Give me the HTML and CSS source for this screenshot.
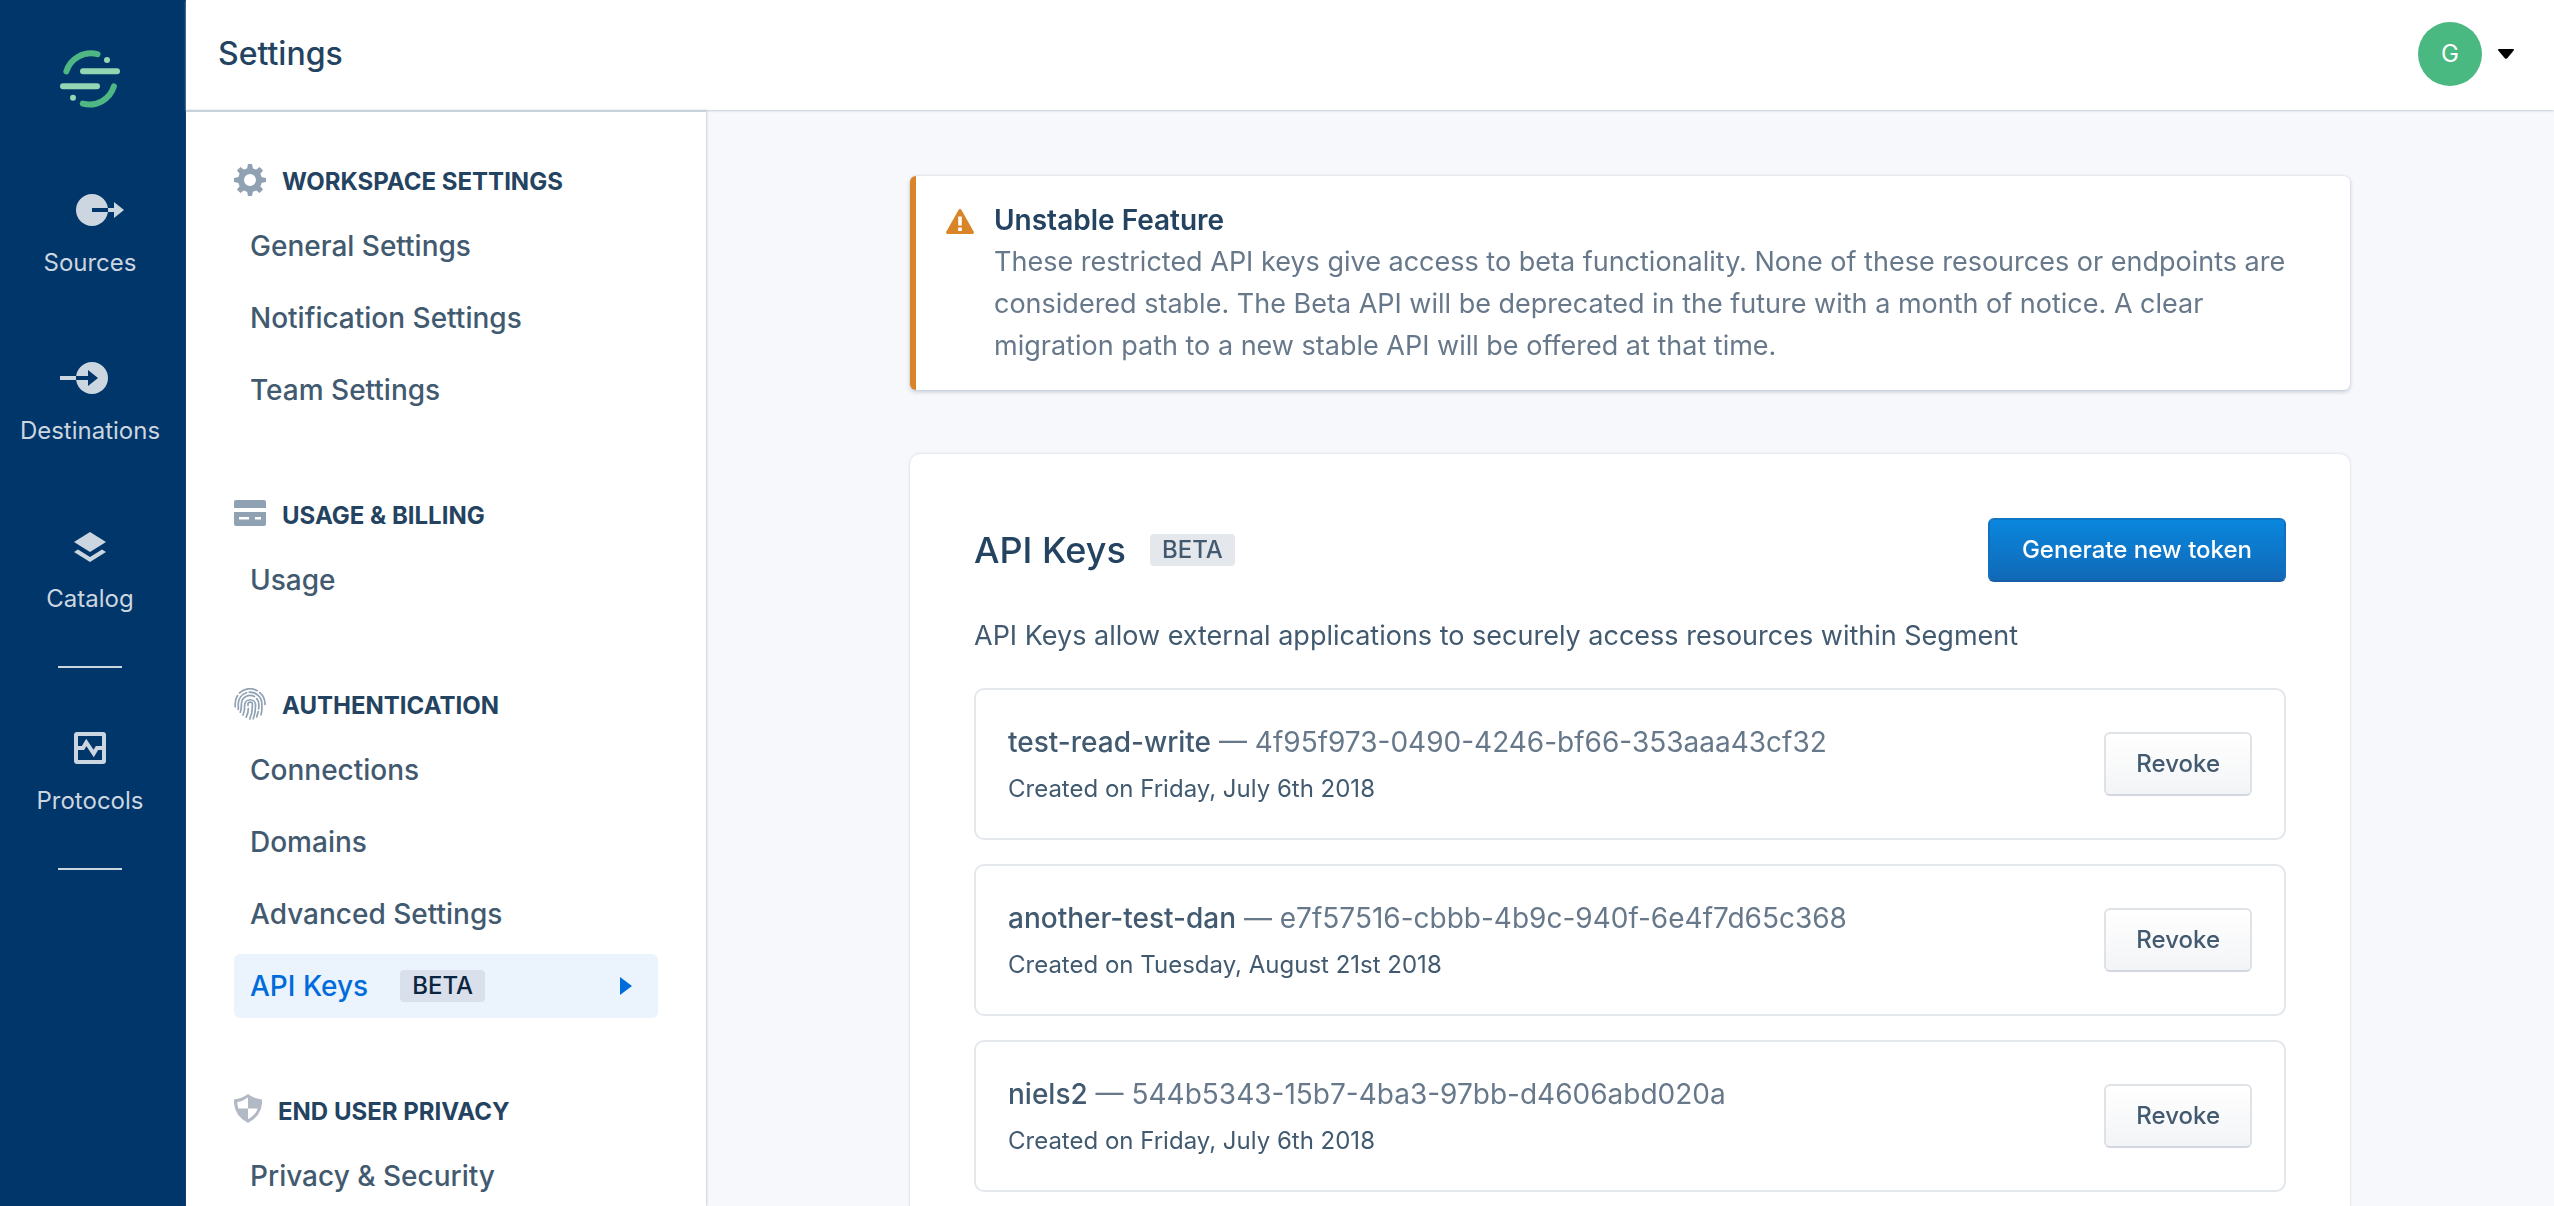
FILE: index.html
```html
<!DOCTYPE html>
<html lang="en">
<head>
<meta charset="utf-8">
<title>Settings – API Keys</title>
<meta name="viewport" content="width=device-width, initial-scale=1">
<link rel="stylesheet" href="styles.css">
</head>
<body>
<div class="app">
  <nav class="rail" aria-label="Primary">
    <a class="logo" href="#" aria-label="Home">
      <svg width="60" height="58" viewBox="0 0 60 58" fill="none" stroke-linecap="round" stroke-width="6">
        <path d="M6.3 21.5A25.6 25.6 0 0 1 37.5 4.2M53.9 36.4A25.6 25.6 0 0 1 22.8 53.6" stroke="#4fb783"/>
        <path d="M23 21.3H57M3 36.3H37" stroke="#93d6b4"/>
        <circle cx="47" cy="10" r="3" fill="#93d6b4"/><circle cx="13" cy="47.7" r="3" fill="#93d6b4"/>
      </svg>
    </a>
    <ul class="rail-group">
      <li><a class="rail-item" href="#">
        <svg width="68" height="32" viewBox="0 0 68 32"><circle cx="36" cy="16" r="16" fill="#ccd6e0"/><path d="M36 14H52V18H36z" fill="#003669"/><path d="M52 14H58V8L68 16L58 24V18H52z" fill="#ccd6e0"/></svg>
        Sources</a></li>
      <li><a class="rail-item" href="#">
        <svg width="68" height="32" viewBox="0 0 68 32"><circle cx="36" cy="16" r="16" fill="#ccd6e0"/><path d="M4 14H20V18H4z" fill="#ccd6e0"/><path d="M20 14H32V8L42 16L32 24V18H20z" fill="#003669"/></svg>
        Destinations</a></li>
      <li><a class="rail-item" href="#">
        <svg width="32" height="32" viewBox="0 0 32 32" fill="#ccd6e0"><path d="M16 2L32 12L16 22L0 12z"/><path d="M0 22L4 19.5L16 27L28 19.5L32 22L16 32z"/></svg>
        Catalog</a></li>
    </ul>
    <hr class="rail-rule">
    <ul class="rail-group rail-group-last">
      <li><a class="rail-item" href="#">
        <svg width="32" height="32" viewBox="0 0 32 32" fill="none" stroke="#ccd6e0" stroke-width="4"><rect x="2" y="2" width="28" height="28" rx="1"/><path d="M3 16H9L12.3 10.5L19.7 21.5L23 16H29"/></svg>
        Protocols</a></li>
    </ul>
    <hr class="rail-rule">
  </nav>

  <div class="shell">
    <header class="topbar">
      <h1>Settings</h1>
      <button class="account" type="button" aria-label="Account menu">
        <span class="avatar">G</span>
        <svg width="16" height="10" viewBox="0 0 16 10"><path d="M1 0H15Q16.5 0 15.7 1.5L9.2 9.2Q8 10.4 6.8 9.2L.3 1.5Q-.5 0 1 0z"/></svg>
      </button>
    </header>

    <div class="body">
      <aside class="panel">
        <section>
          <h2>
            <svg width="32" height="32" viewBox="0 0 32 32" fill="#8fa1b3">
              <circle cx="16" cy="16" r="9" fill="none" stroke="#8fa1b3" stroke-width="6"/>
              <path d="M13 5L14 0H18L19 5zM13 27L14 32H18L19 27zM5 13L0 14V18L5 19zM27 13L32 14V18L27 19z"/>
              <path transform="rotate(45 16 16)" d="M13 5L13.5 0H18.5L19 5zM13 27L13.5 32H18.5L19 27zM5 13L0 13.5V18.5L5 19zM27 13L32 13.5V18.5L27 19z"/>
            </svg>
            Workspace Settings</h2>
          <ul>
            <li><a class="link" href="#">General Settings</a></li>
            <li><a class="link" href="#">Notification Settings</a></li>
            <li><a class="link" href="#">Team Settings</a></li>
          </ul>
        </section>
        <section>
          <h2>
            <svg width="32" height="32" viewBox="0 0 32 32"><path fill="#8fa1b3" fill-rule="evenodd" d="M2 2H30Q32 2 32 4V10H0V4Q0 2 2 2zM0 14H32V26Q32 28 30 28H2Q0 28 0 26zM5 19V21.5H15V19zM21 19V21.5H27V19z"/></svg>
            Usage &amp; Billing</h2>
          <ul>
            <li><a class="link" href="#">Usage</a></li>
          </ul>
        </section>
        <section>
          <h2>
            <svg width="32" height="32" viewBox="0 0 32 32" fill="none" stroke="#8fa1b3" stroke-width="1.7" stroke-linecap="round">
              <path d="M5.5 4.8A15 15 0 0 1 23.3 2.7"/>
              <path d="M25.8 4.6A15 15 0 0 1 31 16.5"/>
              <path d="M3.6 7.6Q.6 12 1.2 18.8"/>
              <path d="M15.3 4.2A12 12 0 0 1 27.9 16Q28.4 22 27 26.8"/>
              <path d="M4.3 21.5Q4.4 19 4.2 16A12 12 0 0 1 12.6 4.7"/>
              <path d="M6.3 24.3Q7.6 21 7.4 16A8.800 8.800 0 0 1 20.5 8.600"/>
              <path d="M22.7 10.6A8.800 8.800 0 0 1 24.8 16Q25 19 24.6 21M24.2 23.6L22.7 29"/>
              <path d="M9 27Q11 22 10.7 16.5A5.5 5.5 0 0 1 21.6 16.5Q21.8 24 19.3 30.7"/>
              <path d="M12.2 29.2Q14.5 24 14.3 20.5"/>
              <path d="M14 17.5V16.3A2.2 2.2 0 0 1 18.4 16.3Q18.6 24.5 15.8 31"/>
            </svg>
            Authentication</h2>
          <ul>
            <li><a class="link" href="#">Connections</a></li>
            <li><a class="link" href="#">Domains</a></li>
            <li><a class="link" href="#">Advanced Settings</a></li>
            <li><a class="link active" href="#" aria-current="page">API Keys <span class="tag">BETA</span>
              <svg class="chevron" width="12" height="18" viewBox="0 0 12 18"><path d="M0 0L12 9L0 18z" fill="#006cdc"/></svg></a></li>
          </ul>
        </section>
        <section>
          <h2>
            <svg width="28" height="29" viewBox="0 0 28 29"><path fill="#b1b9c4" fill-rule="evenodd" d="M14 0Q20 4.6 28 5.5Q29 21 14 29Q-1 21 0 5.5Q8 4.6 14 0zM14 3.6Q9 7.5 3.3 8Q3.3 11 4.3 14.5H14zM14 14.5V25.3Q21.7 21 23.7 14.5z"/></svg>
            End User Privacy</h2>
          <ul>
            <li><a class="link" href="#">Privacy &amp; Security</a></li>
          </ul>
        </section>
      </aside>

      <main>
        <div class="content">
          <section class="alert" role="status">
            <svg width="28" height="25" viewBox="0 0 28 25"><path d="M14 0Q15 0 15.8 1.4L27.6 22.6Q28.6 25 26 25H2Q-.6 25 .4 22.6L12.2 1.4Q13 0 14 0z" fill="#da8428"/><path d="M12.2 7.5H15.8V16.5H12.2zM12.2 18.5H15.8V22H12.2z" fill="#fff"/></svg>
            <div>
              <h3>Unstable Feature</h3>
              <p>These restricted API keys give access to beta functionality. None of these resources or endpoints are considered stable. The Beta API will be deprecated in the future with a month of notice. A clear migration path to a new stable API will be offered at that time.</p>
            </div>
          </section>

          <section class="card">
            <div class="card-head">
              <h2>API Keys</h2>
              <span class="tag">BETA</span>
              <button class="btn btn-primary" type="button">Generate new token</button>
            </div>
            <p class="lead">API Keys allow external applications to securely access resources within Segment</p>
            <ul class="keys">
              <li class="key">
                <div><p class="key-name"><strong>test-read-write</strong> — 4f95f973-0490-4246-bf66-353aaa43cf32</p><p class="key-date">Created on Friday, July 6th 2018</p></div>
                <button class="btn" type="button">Revoke</button>
              </li>
              <li class="key">
                <div><p class="key-name"><strong>another-test-dan</strong> — e7f57516-cbbb-4b9c-940f-6e4f7d65c368</p><p class="key-date">Created on Tuesday, August 21st 2018</p></div>
                <button class="btn" type="button">Revoke</button>
              </li>
              <li class="key">
                <div><p class="key-name"><strong>niels2</strong> — 544b5343-15b7-4ba3-97bb-d4606abd020a</p><p class="key-date">Created on Friday, July 6th 2018</p></div>
                <button class="btn" type="button">Revoke</button>
              </li>
            </ul>
          </section>
        </div>
      </main>
    </div>
  </div>
</div>
</body>
</html>
```
FILE: styles.css
```css
* { box-sizing: border-box; }
body, h1, h2, h3, p, ul { margin: 0; padding: 0; }
ul { list-style: none; }
a { color: inherit; text-decoration: none; }
svg { display: block; flex: none; }
button { font: inherit; cursor: pointer; }

body {
  font-family: Inter, "Liberation Sans", sans-serif;
  font-size: 27px;
  line-height: 42px;
  color: #425a70;
  background: #f7f8fb;
}

.app {
  display: flex;
  height: 100vh;
  overflow: hidden;
}

/* Dark navigation rail */
.rail {
  flex: none;
  width: 186px;
  padding: 50px 6px 0 0;
  background: #003669;
  color: #ccd6e0;
  display: flex;
  flex-direction: column;
  align-items: center;
}
.logo { margin-bottom: 86px; }
.rail-group {
  display: flex;
  flex-direction: column;
  gap: 84px;
  margin-bottom: 52px;
}
.rail-item {
  display: flex;
  flex-direction: column;
  align-items: center;
  gap: 22px;
  font-size: 24px;
  line-height: 30px;
}
.rail-rule {
  flex: none;
  width: 64px;
  height: 2px;
  margin: 0;
  border: 0;
  background: #ccd6e0;
}
.rail-group-last { margin-top: 64px; }

/* Top bar */
.shell {
  flex: 1;
  min-width: 0;
  display: flex;
  flex-direction: column;
}
.topbar {
  flex: none;
  height: 110px;
  padding: 0 40px 2px 32px;
  background: #fff;
  box-shadow: 0 1px 2px #c3cdd8;
  display: flex;
  align-items: center;
  justify-content: space-between;
}
.topbar h1 {
  font-size: 32px;
  font-weight: 500;
  color: #234361;
}
.account {
  display: flex;
  align-items: center;
  gap: 16px;
  padding: 0;
  border: 0;
  background: none;
}
.avatar {
  width: 64px;
  height: 64px;
  border-radius: 50%;
  background: #49b881;
  color: #fff;
  font-size: 24px;
  line-height: 64px;
}

.body {
  flex: 1;
  min-height: 0;
  display: flex;
}

/* Settings navigation */
.panel {
  flex: none;
  width: 520px;
  padding: 52px 48px 0;
  background: #fff;
  border-top: 2px solid #c9d1db;
  box-shadow: 1px 0 2px #c9d1db;
  overflow: auto;
  scrollbar-width: none;
}
.panel section { margin-bottom: 76px; }
.panel h2 {
  display: flex;
  align-items: flex-start;
  gap: 16px;
  margin-bottom: 14px;
  font-size: 24px;
  font-weight: 700;
  line-height: 36px;
  text-transform: uppercase;
  color: #234361;
}
.panel ul {
  display: flex;
  flex-direction: column;
  gap: 8px;
}
.link {
  display: flex;
  align-items: center;
  height: 64px;
  padding: 0 16px;
  border-radius: 6px;
  font-size: 28px;
  font-weight: 500;
}
.link.active {
  padding-right: 26px;
  background: #ebf4fc;
  color: #006cdc;
}
.chevron { margin-left: auto; }

.tag {
  padding: 0 12px;
  border-radius: 4px;
  background: #e4e7eb;
  font-size: 24px;
  font-weight: 500;
  line-height: 32px;
}
.link .tag {
  margin-left: 32px;
  background: #d9dfeb;
  color: #0b2540;
}

/* Main column */
main {
  flex: 1;
  min-width: 0;
  padding: 66px 48px;
  overflow: auto;
  scrollbar-width: none;
}
.content {
  max-width: 1440px;
  margin: 0 auto;
  display: flex;
  flex-direction: column;
  gap: 64px;
}
.alert {
  display: flex;
  gap: 20px;
  padding: 23px 60px 23px 30px;
  border-left: 6px solid #da8428;
  border-radius: 6px;
  background: #fff;
  box-shadow: 0 0 2px #c3cdd8, 0 2px 4px #c3cdd8;
}
.alert svg { margin-top: 10px; }
.alert h3 {
  font-size: 28px;
  font-weight: 600;
  color: #234361;
}
.alert p { color: #66788a; }

.card {
  padding: 64px;
  border-radius: 10px;
  background: #fff;
  box-shadow: 0 0 3px #c9d1db;
}
.card-head {
  display: flex;
  align-items: center;
  gap: 24px;
}
.card-head h2 {
  font-size: 36px;
  font-weight: 500;
  color: #234361;
}
.card-head .btn { margin-left: auto; }
.lead { margin: 33px 0 31px; }

.btn {
  height: 64px;
  padding: 0 30px;
  border: 2px solid #dfe3e8;
  border-bottom-color: #d2d8df;
  border-radius: 6px;
  background: linear-gradient(#fff, #f3f4f6);
  color: #425a70;
  font-size: 24px;
  font-weight: 500;
  line-height: 30px;
}
.btn-primary {
  padding: 0 32px;
  border-color: #0f76c6 #0f71c0 #175ea6;
  background: linear-gradient(#0988df, #1167b5) border-box;
  color: #fff;
}

.keys {
  display: flex;
  flex-direction: column;
  gap: 24px;
}
.key {
  display: flex;
  align-items: center;
  justify-content: space-between;
  min-height: 152px;
  padding: 0 32px;
  border: 2px solid #e4e7eb;
  border-radius: 10px;
}
.key-name {
  font-size: 28px;
  color: #66788a;
}
.key-name strong {
  font-weight: 500;
  color: #425a70;
}
.key-date {
  margin-top: 8px;
  font-size: 24px;
  line-height: 36px;
}
```
